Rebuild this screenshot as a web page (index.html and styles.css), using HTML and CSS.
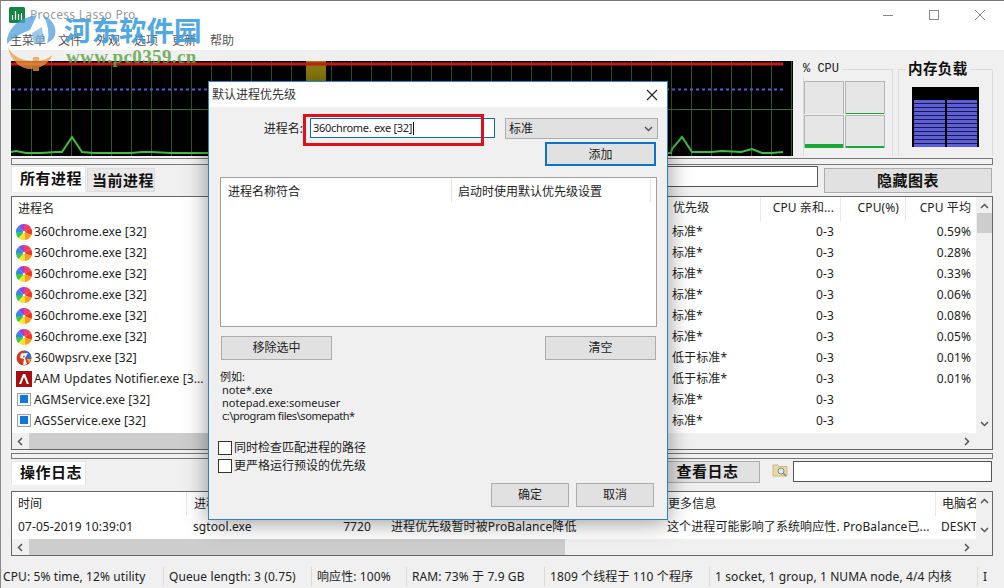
FILE: index.html
```html
<!DOCTYPE html>
<html lang="zh-CN">
<head>
<meta charset="utf-8">
<title>Process Lasso Pro</title>
<link rel="stylesheet" href="styles.css">
</head>
<body>
<svg class="defs" width="0" height="0" aria-hidden="true">
  <symbol id="i360" viewBox="0 0 16 16">
    <path d="M8 8L8 0A8 8 0 0 1 15 4Z" fill="#f0406a"/>
    <path d="M8 8L15 4A8 8 0 0 1 15.5 11Z" fill="#ee3a24"/>
    <path d="M8 8L15.5 11A8 8 0 0 1 9 16Z" fill="#f99f1b"/>
    <path d="M8 8L9 16A8 8 0 0 1 2.500 14Z" fill="#f7e52c"/>
    <path d="M8 8L2.500 14A8 8 0 0 1 0 8Z" fill="#35c455"/>
    <path d="M8 8L0 8A8 8 0 0 1 2.500 2Z" fill="#2f88f0"/>
    <path d="M8 8L2.500 2A8 8 0 0 1 8 0Z" fill="#9a3fe6"/>
    <circle cx="8" cy="8" r="1.300" fill="#fff" opacity=".8"/>
  </symbol>
  <symbol id="iwps" viewBox="0 0 16 16">
    <circle cx="8" cy="8" r="7.500" fill="#cf3a20"/>
    <path d="M8 .5A7.500 7.500 0 0 1 15.500 8L10 9Z" fill="#2f6fd0"/>
    <path d="M5 3.500L12 3 9 8l2 6-4 1.500 1-6.500-4-1Z" fill="#fff"/>
    <path d="M7 6l2-.5-1 3Z" fill="#cf3a20"/>
    <path d="M11 9h4l-2 4Z" fill="#f0b429"/>
  </symbol>
  <symbol id="iaam" viewBox="0 0 16 16">
    <rect width="16" height="16" fill="#a50f12"/>
    <path d="M7 3h2.200L13 13h-2.200L8 6l-2.800 7H3Z" fill="#fff"/>
  </symbol>
  <symbol id="isvc" viewBox="0 0 16 16">
    <rect x="1.500" y="1.500" width="13" height="12" fill="#f4f4f4" stroke="#9aa5b0"/>
    <rect x="4" y="3" width="8" height="8" fill="#1177d8"/>
  </symbol>
  <symbol id="cu" viewBox="0 0 9 6"><path d="M1 5l3.500-3.500L8 5" fill="none" stroke="#555" stroke-width="1.500"/></symbol>
  <symbol id="cd" viewBox="0 0 9 6"><path d="M1 1l3.500 3.500L8 1" fill="none" stroke="#555" stroke-width="1.500"/></symbol>
  <symbol id="cl" viewBox="0 0 6 9"><path d="M5 1L1.500 4.500 5 8" fill="none" stroke="#555" stroke-width="1.500"/></symbol>
  <symbol id="cr" viewBox="0 0 6 9"><path d="M1 1l3.500 3.500L1 8" fill="none" stroke="#555" stroke-width="1.500"/></symbol>
</svg>

<div class="window">
  <header class="titlebar">
    <svg class="appicon" viewBox="0 0 16 16" width="16" height="16">
      <rect width="16" height="16" rx="1.500" fill="#13863f"/>
      <path d="M3.500 13V8M6.500 13V4M9.500 13V7M12.500 13V6" stroke="#fff" stroke-width="1.200"/>
    </svg>
    <span class="apptitle">Process Lasso Pro</span>
    <div class="winbtns">
      <svg class="wb" viewBox="0 0 12 12" width="12" height="12"><path d="M1 6.500h10" stroke="#888"/></svg>
      <svg class="wb" viewBox="0 0 12 12" width="12" height="12"><rect x="1.500" y="1.500" width="9" height="9" fill="none" stroke="#888"/></svg>
      <svg class="wb" viewBox="0 0 12 12" width="12" height="12"><path d="M1 1l10 10M11 1L1 11" stroke="#888"/></svg>
    </div>
  </header>
  <nav class="menubar">
    <span>主菜单</span><span>文件</span><span>外观</span><span>选项</span><span>更新</span><span>帮助</span>
  </nav>

  <section class="charts">
    <svg class="graph" viewBox="0 0 782 95" width="782" height="95">
      <defs>
        <pattern id="gridv" x="0" y="0" width="20" height="95" patternUnits="userSpaceOnUse">
          <path d="M0 0V95" stroke="#3a733a" stroke-width="1.500"/>
        </pattern>
      </defs>
      <rect width="782" height="95" fill="#000"/>
      <rect x="1" width="781" height="95" fill="url(#gridv)"/>
      <rect x="295" width="20" height="95" fill="#8b7d10"/>
      <path d="M0 48.500H782" stroke="#3a733a"/>
      <path d="M0 3H772" stroke="#c81a1a" stroke-width="3"/>
      <path d="M1 28.500H772" stroke="#5a5ae0" stroke-width="2" stroke-dasharray="3 3"/>
      <path d="M0 91L5 90 15 92 30 92 45 91 51 91 61 76 71 91 83 92 100 92 120 92 131 91 140 91 160 92 660 92 661 88 671 76 681 91 700 91 711 90 730 91 741 88 751 92 761 92 772 91" fill="none" stroke="#3fbf3f" stroke-width="2"/>
    </svg>

    <fieldset class="gauge gauge-cpu">
      <legend class="legend-cpu">% CPU</legend>
      <div class="cores">
        <div class="core"></div>
        <div class="core"><i class="load load-1"></i></div>
        <div class="core"><i class="load load-4"></i></div>
        <div class="core"><i class="load load-2"></i></div>
      </div>
    </fieldset>

    <fieldset class="gauge gauge-mem">
      <legend class="legend-mem">内存负载</legend>
      <div class="membox">
        <div class="memcol"></div>
        <div class="memcol"></div>
      </div>
    </fieldset>
  </section>

  <div class="splitter"></div>

  <div class="tabrow">
    <div class="tab active">所有进程</div>
    <div class="tab inactive">当前进程</div>
    <div class="filter"></div>
    <button class="heavybtn hide">隐藏图表</button>
  </div>

  <section class="table proc">
    <div class="tablecore">
      <div class="cols">
        <div class="row head">
          <span class="c name">进程名</span>
          <span class="c prio">优先级</span>
          <span class="c aff">CPU 亲和...</span>
          <span class="c cpu">CPU(%)</span>
          <span class="c avg">CPU 平均</span>
        </div>
        <div class="row"><span class="c name"><svg class="ico"><use href="#i360"/></svg>360chrome.exe [32]</span><span class="c prio">标准*</span><span class="c aff">0-3</span><span class="c cpu"></span><span class="c avg">0.59%</span></div>
        <div class="row"><span class="c name"><svg class="ico"><use href="#i360"/></svg>360chrome.exe [32]</span><span class="c prio">标准*</span><span class="c aff">0-3</span><span class="c cpu"></span><span class="c avg">0.28%</span></div>
        <div class="row"><span class="c name"><svg class="ico"><use href="#i360"/></svg>360chrome.exe [32]</span><span class="c prio">标准*</span><span class="c aff">0-3</span><span class="c cpu"></span><span class="c avg">0.33%</span></div>
        <div class="row"><span class="c name"><svg class="ico"><use href="#i360"/></svg>360chrome.exe [32]</span><span class="c prio">标准*</span><span class="c aff">0-3</span><span class="c cpu"></span><span class="c avg">0.06%</span></div>
        <div class="row"><span class="c name"><svg class="ico"><use href="#i360"/></svg>360chrome.exe [32]</span><span class="c prio">标准*</span><span class="c aff">0-3</span><span class="c cpu"></span><span class="c avg">0.08%</span></div>
        <div class="row"><span class="c name"><svg class="ico"><use href="#i360"/></svg>360chrome.exe [32]</span><span class="c prio">标准*</span><span class="c aff">0-3</span><span class="c cpu"></span><span class="c avg">0.05%</span></div>
        <div class="row"><span class="c name"><svg class="ico"><use href="#iwps"/></svg>360wpsrv.exe [32]</span><span class="c prio">低于标准*</span><span class="c aff">0-3</span><span class="c cpu"></span><span class="c avg">0.01%</span></div>
        <div class="row"><span class="c name"><svg class="ico"><use href="#iaam"/></svg>AAM Updates Notifier.exe [3...</span><span class="c prio">低于标准*</span><span class="c aff">0-3</span><span class="c cpu"></span><span class="c avg">0.01%</span></div>
        <div class="row"><span class="c name"><svg class="ico"><use href="#isvc"/></svg>AGMService.exe [32]</span><span class="c prio">标准*</span><span class="c aff">0-3</span><span class="c cpu"></span><span class="c avg"></span></div>
        <div class="row"><span class="c name"><svg class="ico"><use href="#isvc"/></svg>AGSService.exe [32]</span><span class="c prio">标准*</span><span class="c aff">0-3</span><span class="c cpu"></span><span class="c avg"></span></div>
      </div>
      <div class="vscroll">
        <svg class="chev"><use href="#cu"/></svg>
        <div class="vthumb"></div>
        <svg class="chev end"><use href="#cd"/></svg>
      </div>
    </div>
    <div class="hscroll">
      <svg class="chevh"><use href="#cl"/></svg>
      <div class="hthumb"></div>
      <svg class="chevh end"><use href="#cr"/></svg>
    </div>
  </section>

  <div class="splitter second"></div>

  <div class="tabrow logrow">
    <div class="tab active">操作日志</div>
    <button class="heavybtn viewlog">查看日志</button>
    <svg class="findicon" viewBox="0 0 16 16" width="16" height="16">
      <path d="M1 3h5l1 1.500h8V14H1Z" fill="#e8d9a0" stroke="#c9b880"/>
      <circle cx="9" cy="9" r="3" fill="#dfeaf2" stroke="#7a8a96"/>
      <path d="M11 11l3 3" stroke="#7a8a96" stroke-width="1.500"/>
    </svg>
    <div class="findbox"></div>
  </div>

  <section class="table log">
    <div class="tablecore">
      <div class="cols">
        <div class="row lrow head">
          <span class="c ltime">时间</span>
          <span class="c lproc">进程</span>
          <span class="c lpid">PID</span>
          <span class="c lact">操作</span>
          <span class="c lmore">更多信息</span>
          <span class="c lpc">电脑名</span>
        </div>
        <div class="row lrow">
          <span class="c ltime">07-05-2019 10:39:01</span>
          <span class="c lproc">sgtool.exe</span>
          <span class="c lpid">7720</span>
          <span class="c lact">进程优先级暂时被ProBalance降低</span>
          <span class="c lmore">这个进程可能影响了系统响应性. ProBalance已...</span>
          <span class="c lpc">DESKT</span>
        </div>
      </div>
      <div class="vscroll">
        <svg class="chev"><use href="#cu"/></svg>
        <svg class="chev end"><use href="#cd"/></svg>
      </div>
    </div>
    <div class="hscroll">
      <svg class="chevh"><use href="#cl"/></svg>
      <div class="hthumb logthumb"></div>
      <svg class="chevh end"><use href="#cr"/></svg>
    </div>
  </section>

  <footer class="statusbar">
    <span class="st st1">CPU: 5% time, 12% utility</span>
    <span class="st st2">Queue length: 3 (0.75)</span>
    <span class="st st3">响应性: 100%</span>
    <span class="st st4">RAM: 73% 于 7.9 GB</span>
    <span class="st st5">1809 个线程于 110 个程序</span>
    <span class="st st6">1 socket, 1 group, 1 NUMA node, 4/4 内核</span>
    <span class="st st7">I</span>
  </footer>
</div>

<div class="watermark">
  <svg class="wm-logo" viewBox="0 0 60 64" width="60" height="64">
    <path d="M33 6C18 8 6 16 3 30L3 35C10 28 18 24 26 21Z" fill="#4f9fdc"/>
    <path d="M39 6C48 10 53 18 51 26C50 30 47 32 43 34C46 26 44 14 39 6Z" fill="#4f9fdc"/>
    <path d="M28 24L38 18 40 33 30 35Z" fill="#7db8e4"/>
    <path d="M4 38C8 48 20 52 30 52C38 52 44 50 48 46C46 54 36 60 26 60C16 60 6 50 4 38Z" fill="#f19a3e"/>
    <path d="M29 48h6v14h-6z" fill="#f19a3e"/>
  </svg>
  <div class="wm-cn">河东软件园</div>
  <div class="wm-url">www.pc0359.cn</div>
</div>

<div class="dialog">
  <div class="dlg-title">
    <span>默认进程优先级</span>
    <svg viewBox="0 0 12 12" width="12" height="12"><path d="M1 1l10 10M11 1L1 11" stroke="#222" stroke-width="1.100"/></svg>
  </div>
  <div class="dlg-body">
    <div class="dlg-form">
      <label class="dlg-label">进程名:</label>
      <div class="dlg-input">360chrome. exe [32]<i class="caret"></i></div>
      <div class="dlg-select"><span>标准</span><svg class="selchev"><use href="#cd"/></svg></div>
    </div>
    <button class="btn add">添加</button>
    <div class="dlg-list">
      <div class="list-head">
        <span class="lh1">进程名称符合</span>
        <span class="lh2">启动时使用默认优先级设置</span>
      </div>
    </div>
    <div class="dlg-actions">
      <button class="btn wide">移除选中</button>
      <button class="btn wide">清空</button>
    </div>
    <div class="examples">
      <div>例如:</div>
      <div class="ex">note*.exe</div>
      <div class="ex">notepad.exe:someuser</div>
      <div class="ex ex-path">c:\program files\somepath*</div>
    </div>
    <div class="checks">
      <label class="check"><i class="box"></i>同时检查匹配进程的路径</label>
      <label class="check"><i class="box"></i>更严格运行预设的优先级</label>
    </div>
    <div class="dlg-foot">
      <button class="btn foot">确定</button>
      <button class="btn foot">取消</button>
    </div>
  </div>
  <div class="redmark"></div>
</div>
</body>
</html>
```

FILE: styles.css
```css
* { box-sizing: border-box; }
html, body { margin: 0; padding: 0; }
body {
  position: relative;
  width: 1004px;
  height: 588px;
  overflow: hidden;
  font: 12px/16px "Noto Sans", "Noto Sans CJK SC", sans-serif;
  color: #222;
  background: #f0f0f0;
}
.defs { position: absolute; }
button { font: inherit; color: inherit; padding: 0; }

.window {
  height: 588px;
  display: flex;
  flex-direction: column;
  border-left: 1px solid #8a8a8a;
  border-top: 1px solid #777;
}

/* title + menu */
.titlebar {
  height: 27px;
  flex: none;
  display: flex;
  align-items: center;
  padding-left: 8px;
  background: #fff;
}
.apptitle { margin-left: 5px; color: #999; font-size: 12px; letter-spacing: .3px; }
.winbtns { margin-left: auto; display: flex; gap: 34px; padding-right: 18px; }
.menubar {
  height: 22px;
  flex: none;
  display: flex;
  align-items: center;
  gap: 14px;
  padding: 4px 0 0 9px;
  background: #fff;
  color: #555;
}
.menubar span:first-child { margin-right: -2px; }

/* charts */
.charts {
  flex: none;
  height: 95px;
  margin: 11px 0 0 10px;
  display: flex;
}
.graph { flex: none; display: block; }
.gauge {
  margin: 0;
  padding: 0;
  min-width: 0;
  height: 95px;
  border: 1px solid #dcdcdc;
  border-bottom: 0;
}
.gauge-cpu { width: 90px; margin-left: 10px; }
.gauge-mem { width: 95px; margin-left: 5px; }
.legend-cpu {
  padding: 0 3px 0 0;
  margin-left: -1px;
  font: 12px/16px "Liberation Mono", monospace;
  color: #222;
}
.legend-mem {
  padding: 0 2px;
  margin-left: 7px;
  font: bold 14.500px/16px "Liberation Serif", "Noto Sans CJK SC", serif;
  letter-spacing: .4px;
  color: #111;
}
.cores {
  width: 81px;
  margin-top: 4px;
  display: grid;
  grid-template-columns: 40px 40px;
  grid-auto-rows: 33px;
  gap: 1px;
}
.core {
  display: flex;
  align-items: flex-end;
  background: #e6e6e6;
  border: 1px solid #b4b4b4;
  border-width: 1px 1px 0;
}
.load { display: block; width: 100%; background: #18a836; }
.load-1 { height: 1px; }
.load-2 { height: 2px; }
.load-4 { height: 4px; }
.membox {
  width: 67px;
  height: 60px;
  margin: 10px 0 0 13px;
  padding: 0 2px;
  display: flex;
  gap: 2px;
  background: #000;
}
.memcol {
  flex: 1;
  margin-top: 13px;
  background: repeating-linear-gradient(#5e5ed8 0 3px, #1a1a4a 3px 4px);
}

.splitter {
  flex: none;
  height: 7px;
  margin: 2px 11px 0 10px;
  border: 1px solid #777;
  background: #f2f2f2;
}
.splitter.second { margin-top: 3px; height: 6px; }

/* tabs */
.tabrow {
  flex: none;
  height: 27px;
  margin: 1px 11px 0 10px;
  display: flex;
  align-items: flex-start;
}
.tab {
  font: bold 15px/24px "Liberation Serif", "Noto Sans CJK SC", serif;
  color: #111;
  letter-spacing: .5px;
}
.tab.active {
  width: 75px;
  height: 26px;
  padding-left: 8px;
  background: #fff;
  border: 1px solid #e4e4e4;
  border-bottom: 0;
}
.tab.inactive {
  width: 68px;
  height: 24px;
  margin: 2px 0 0 1px;
  padding-left: 4px;
  background: #e8e8e8;
  border: 1px solid #dcdcdc;
}
.filter {
  flex: 1;
  height: 21px;
  margin-left: 100px;
  background: #fff;
  border: 1px solid #555;
}
.heavybtn {
  font: bold 15px/22px "Liberation Serif", "Noto Sans CJK SC", serif;
  color: #111;
  letter-spacing: .5px;
  background: #e1e1e1;
  border: 1px solid #adadad;
  text-align: center;
}
.hide {
  width: 168px;
  height: 25px;
  margin: 2px 1px 0 6px;
}

/* tables */
.table {
  flex: none;
  margin: 3px 11px 0 10px;
  border: 1px solid #666;
  background: #fff;
  display: flex;
  flex-direction: column;
  overflow: hidden;
}
.table.proc { height: 254px; }
.table.log { height: 65px; margin-top: 3px; }
.tablecore { flex: 1; min-height: 0; display: flex; }
.cols { flex: 1; min-width: 0; overflow: hidden; }
.row {
  display: grid;
  grid-template-columns: 655px 93px 80px 65px 71px;
  height: 21px;
  align-items: center;
  white-space: nowrap;
  letter-spacing: .1px;
}
.row.head { height: 24px; }
.c { overflow: hidden; padding-right: 6px; display: block; }
.row.head .c { height: 24px; line-height: 22px; }
.row.head .c + .c { border-left: 1px solid #e8e8e8; }
.name { padding-left: 4px; display: flex; align-items: center; }
.head .name { padding-left: 6px; }
.prio { padding-left: 5px; }
.aff, .cpu { text-align: right; }
.avg { text-align: right; padding-right: 5px; }
.ico { width: 16px; height: 16px; margin-right: 2px; flex: none; }

.vscroll {
  flex: none;
  width: 16px;
  background: #f0f0f0;
  display: flex;
  flex-direction: column;
  align-items: center;
}
.chev { width: 9px; height: 6px; margin-top: 6px; flex: none; }
.chev.end { margin-top: auto; margin-bottom: 6px; }
.vthumb { width: 15px; height: 20px; margin-top: 4px; background: #cdcdcd; }
.hscroll {
  flex: none;
  height: 16px;
  display: flex;
  align-items: center;
  background: #f0f0f0;
}
.chevh { width: 6px; height: 9px; margin-left: 5px; flex: none; }
.chevh.end { margin: 0 22px 0 auto; }
.hthumb { width: 480px; height: 16px; margin-left: 6px; background: #cdcdcd; }
.logthumb { width: 536px; }

.logrow { margin-top: 2px; }
.logrow .tab.active { height: 24px; line-height: 22px; border-top: 1px solid #e4e4e4; }
.viewlog {
  width: 105px;
  height: 22px;
  line-height: 20px;
  margin-left: auto;
}
.findicon { margin: 1px 5px 0 12px; flex: none; }
.findbox {
  width: 199px;
  height: 21px;
  margin-right: 1px;
  background: #fff;
  border: 1px solid #555;
}
.lrow {
  grid-template-columns: 174px 150px 35px 290px 274px 41px;
}
.ltime { padding-left: 6px; }
.lproc { padding-left: 7px; }
.lpid { padding: 0; text-align: right; }
.lact { padding-left: 20px; }
.lmore { padding-left: 6px; padding-right: 0; }
.lpc { padding: 0 0 0 6px; }
.log .row { height: 20px; }
.log .row.head { height: 24px; }
.log .row.head .c { line-height: 24px; }
.log .row:not(.head) { padding-top: 2px; }

/* status */
.statusbar {
  flex: none;
  height: 23px;
  margin-top: auto;
  display: flex;
  align-items: center;
  white-space: nowrap;
  letter-spacing: .1px;
}
.st { height: 19px; line-height: 19px; padding-left: 5px; border-right: 1px solid #dcdcdc; flex: none; overflow: hidden; }
.st1 { width: 163px; padding-left: 2px; }
.st2 { width: 148px; }
.st3 { width: 95px; }
.st4 { width: 138px; }
.st5 { width: 165px; }
.st6 { width: 268px; }
.st7 { border-right: 0; }

/* watermark over the window */
.watermark {
  position: absolute;
  left: 4px;
  top: 9px;
  width: 210px;
  height: 64px;
  pointer-events: none;
}
.wm-logo { position: absolute; left: 0; top: 0; opacity: .75; }
.wm-cn {
  position: absolute;
  left: 60px;
  top: 3px;
  font: bold 27.500px/34px "Noto Sans CJK SC", sans-serif;
  color: #3f9fe0;
  white-space: nowrap;
  opacity: .9;
}
.wm-url {
  position: absolute;
  left: 62px;
  top: 39px;
  font: bold 19px/18px "Liberation Serif", serif;
  color: #5fa84a;
  letter-spacing: .4px;
  white-space: nowrap;
  opacity: .85;
}

/* dialog */
.dialog {
  position: absolute;
  left: 208px;
  top: 81px;
  width: 460px;
  height: 439px;
  background: #f0f0f0;
  border: 1px solid #2f82c4;
  box-shadow: 0 2px 22px rgba(0, 0, 0, .42);
}
.dlg-title {
  height: 25px;
  display: flex;
  align-items: center;
  justify-content: space-between;
  padding: 0 9px 0 3px;
  background: #fff;
  color: #333;
}
.dlg-body {
  padding: 11px 10px 0 11px;
  display: flex;
  flex-direction: column;
}
.dlg-form { display: flex; height: 21px; margin-right: -1px; }
.dlg-label {
  width: 83px;
  text-align: right;
  line-height: 22px;
}
.dlg-input {
  width: 185px;
  margin: 0 10px 0 7px;
  height: 20px;
  padding-left: 2px;
  background: #fff;
  border: 1px solid #0d6cba;
  font-size: 11px;
  line-height: 18px;
  letter-spacing: -.3px;
  white-space: nowrap;
  display: flex;
  align-items: center;
}
.caret { width: 1px; height: 13px; background: #111; margin-left: 1px; }
.dlg-select {
  flex: 1;
  display: flex;
  align-items: center;
  justify-content: space-between;
  padding: 0 4px 0 3px;
  background: #e1e1e1;
  border: 1px solid #adadad;
}
.selchev { width: 9px; height: 6px; }
.btn {
  background: #e1e1e1;
  border: 1px solid #adadad;
  text-align: center;
  height: 24px;
  width: 111px;
}
.add {
  align-self: flex-end;
  margin: 3px 1px 0 0;
  padding-top: 2px;
  border: 2px solid #0d73c7;
}
.dlg-list {
  height: 150px;
  margin-top: 11px;
  background: #fff;
  border: 1px solid #a0a0a0;
}
.list-head { height: 26px; display: flex; }
.list-head span { height: 24px; line-height: 27px; display: block; }
.lh1 { width: 231px; padding-left: 7px; border-right: 1px solid #e4e4e4; }
.lh2 { width: 199px; padding-left: 6px; border-right: 1px solid #e4e4e4; }
.dlg-actions { display: flex; justify-content: space-between; margin: 9px 1px 0; }
.examples { margin-top: 10px; line-height: 13px; font-size: 11px; }
.ex { padding-left: 2px; }
.ex-path { letter-spacing: -.42px; }
.checks { margin: 17px 0 0 -2px; }
.check { display: flex; align-items: center; height: 18px; }
.box {
  width: 14px;
  height: 14px;
  margin-right: 2px;
  background: #fff;
  border: 1px solid #333;
  flex: none;
}
.dlg-foot { display: flex; justify-content: flex-end; gap: 7px; margin: 8px 3px 0 0; }
.foot { width: 78px; }
.redmark {
  position: absolute;
  left: 94px;
  top: 32px;
  width: 181px;
  height: 32px;
  border: 3px solid #e0101a;
}
```
